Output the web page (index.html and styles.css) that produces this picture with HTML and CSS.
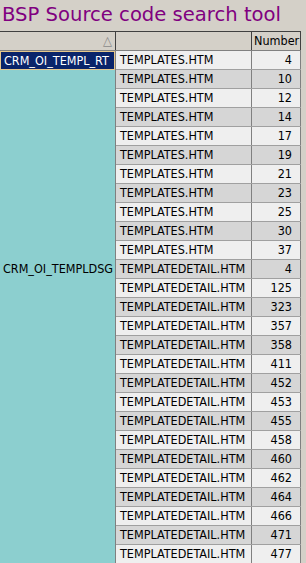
FILE: index.html
```html
<!DOCTYPE html>
<html>
<head>
<meta charset="utf-8">
<link rel="stylesheet" href="styles.css">
</head>
<body>
<h1 class="title">BSP Source code search tool</h1>
<table class="grid">
<thead>
<tr><th class="c1"><span class="sort">&#9651;</span></th><th class="c2"></th><th class="c3">Number</th></tr>
</thead>
<tbody>
<tr class="l"><td class="app" rowspan="11"><span class="sel">CRM_OI_TEMPL_RT</span></td><td>TEMPLATES.HTM</td><td class="n">4</td></tr>
<tr class="d"><td>TEMPLATES.HTM</td><td class="n">10</td></tr>
<tr class="l"><td>TEMPLATES.HTM</td><td class="n">12</td></tr>
<tr class="d"><td>TEMPLATES.HTM</td><td class="n">14</td></tr>
<tr class="l"><td>TEMPLATES.HTM</td><td class="n">17</td></tr>
<tr class="d"><td>TEMPLATES.HTM</td><td class="n">19</td></tr>
<tr class="l"><td>TEMPLATES.HTM</td><td class="n">21</td></tr>
<tr class="d"><td>TEMPLATES.HTM</td><td class="n">23</td></tr>
<tr class="l"><td>TEMPLATES.HTM</td><td class="n">25</td></tr>
<tr class="d"><td>TEMPLATES.HTM</td><td class="n">30</td></tr>
<tr class="l"><td>TEMPLATES.HTM</td><td class="n">37</td></tr>
<tr class="d"><td class="app" rowspan="16"><span class="plain">CRM_OI_TEMPLDSG</span></td><td>TEMPLATEDETAIL.HTM</td><td class="n">4</td></tr>
<tr class="l"><td>TEMPLATEDETAIL.HTM</td><td class="n">125</td></tr>
<tr class="d"><td>TEMPLATEDETAIL.HTM</td><td class="n">323</td></tr>
<tr class="l"><td>TEMPLATEDETAIL.HTM</td><td class="n">357</td></tr>
<tr class="d"><td>TEMPLATEDETAIL.HTM</td><td class="n">358</td></tr>
<tr class="l"><td>TEMPLATEDETAIL.HTM</td><td class="n">411</td></tr>
<tr class="d"><td>TEMPLATEDETAIL.HTM</td><td class="n">452</td></tr>
<tr class="l"><td>TEMPLATEDETAIL.HTM</td><td class="n">453</td></tr>
<tr class="d"><td>TEMPLATEDETAIL.HTM</td><td class="n">455</td></tr>
<tr class="l"><td>TEMPLATEDETAIL.HTM</td><td class="n">458</td></tr>
<tr class="d"><td>TEMPLATEDETAIL.HTM</td><td class="n">460</td></tr>
<tr class="l"><td>TEMPLATEDETAIL.HTM</td><td class="n">462</td></tr>
<tr class="d"><td>TEMPLATEDETAIL.HTM</td><td class="n">464</td></tr>
<tr class="l"><td>TEMPLATEDETAIL.HTM</td><td class="n">466</td></tr>
<tr class="d"><td>TEMPLATEDETAIL.HTM</td><td class="n">471</td></tr>
<tr class="l"><td>TEMPLATEDETAIL.HTM</td><td class="n">477</td></tr>
</tbody>
</table>
</body>
</html>
```
FILE: styles.css
```css
html, body {
  margin: 0;
  padding: 0;
  background: #d4d0c8;
  overflow: hidden;
}
body {
  font-family: "DejaVu Sans Condensed", "DejaVu Sans", sans-serif;
  font-size: 12.5px;
  color: #000;
}
.title {
  margin: 0;
  height: 31px;
  padding-left: 2px;
  font-family: "DejaVu Sans", sans-serif;
  font-weight: normal;
  font-size: 19.6px;
  line-height: 30px;
  color: #800080;
  white-space: nowrap;
}
.grid {
  border-collapse: collapse;
  table-layout: fixed;
  width: 301px;
}
.grid th, .grid td {
  height: 18px;
  padding: 0 2px 0 4px;
  line-height: 18px;
  white-space: nowrap;
  overflow: hidden;
}
.grid th {
  background: #d4d0c8;
  border-top: 1px solid #404040;
  border-right: 1px solid #404040;
  border-bottom: 1px solid #808080;
  font-weight: normal;
  text-align: right;
  padding: 0 2px;
}
.c1 { width: 111px; }
.c2 { width: 131px; }
.c3 { width: 44px; }
.sort {
  color: #8a8a8a;
  font-size: 13px;
  padding-right: 1px;
}
.grid td {
  border-bottom: 1px solid #a0a0a0;
  border-right: 1px solid #808080;
}
.grid tr.l td { background: #efefef; }
.grid tr.d td { background: #d6d6d6; }
.grid td.app {
  background: #8ccfcf !important;
  vertical-align: top;
  padding: 0;
  border-bottom: none;
  border-right: 1px solid #808080;
}
.sel {
  display: block;
  background: #0a246a;
  color: #fff;
  border: 1px solid #e6c88c;
  height: 17px;
  line-height: 17px;
  padding-left: 3px;
}
.plain {
  display: block;
  height: 19px;
  line-height: 18px;
  padding-left: 3px;
}
.grid td.n { text-align: right; padding-right: 8px; }
```
